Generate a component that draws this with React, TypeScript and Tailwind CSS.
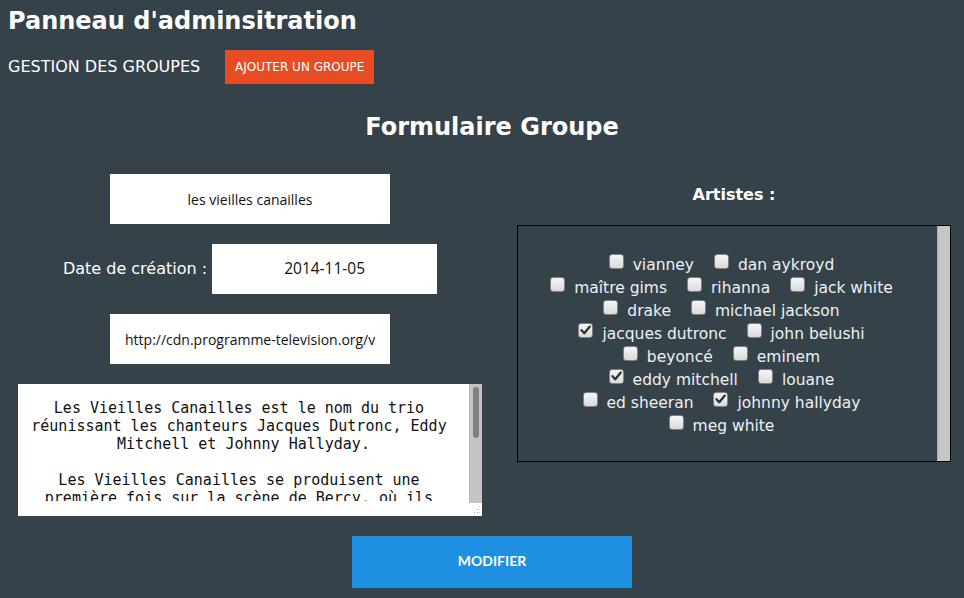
import React from "react";

type Artist = { name: string; checked?: boolean };

const rows: Artist[][] = [
  [{ name: "vianney" }, { name: "dan aykroyd" }],
  [{ name: "maître gims" }, { name: "rihanna" }, { name: "jack white" }],
  [{ name: "drake" }, { name: "michael jackson" }],
  [{ name: "jacques dutronc", checked: true }, { name: "john belushi" }],
  [{ name: "beyoncé" }, { name: "eminem" }],
  [{ name: "eddy mitchell", checked: true }, { name: "louane" }],
  [{ name: "ed sheeran" }, { name: "johnny hallyday", checked: true }],
  [{ name: "meg white" }],
];

function Checkbox({ checked }: { checked?: boolean }) {
  return (
    <span className="relative inline-block w-[15px] h-[15px] mb-px ml-[4px] mr-[9px] rounded-[3px] border border-[#7d8285] bg-gradient-to-b from-[#f6f6f6] to-[#dadada]">
      {checked && (
        <svg
          viewBox="0 0 15 15"
          className="absolute -left-px -top-px w-[15px] h-[15px]"
        >
          <path
            d="M3.5 7.2 L6.3 10.2 L11.8 3.6"
            fill="none"
            stroke="#2f3336"
            strokeWidth="2.3"
            strokeLinecap="round"
            strokeLinejoin="round"
          />
        </svg>
      )}
    </span>
  );
}

export default function App() {
  return (
    <div className="min-h-screen w-full overflow-hidden bg-[#36424a] text-white font-['DejaVu_Sans',sans-serif]">
      {/* header */}
      <h1 className="pl-2 pt-[7px] text-[24px] font-bold leading-[28px]">
        Panneau d'adminsitration
      </h1>
      <div className="mt-[15px] flex h-[34px] items-center pl-2">
        <span className="-mt-[2px] text-[16px] leading-[19px]">
          GESTION DES GROUPES
        </span>
        <button className="ml-[25px] h-[34px] w-[149px] bg-[#e84c22] text-[12px] text-white">
          AJOUTER UN GROUPE
        </button>
      </div>

      <h2 className="mt-[29px] pl-5 text-center text-[24px] font-bold leading-[28px]">
        Formulaire Groupe
      </h2>

      {/* form */}
      <div className="mt-[33px] flex">
        <div className="flex w-[500px] flex-col items-center gap-5">
          <div className="flex h-[50px] w-[280px] items-center justify-center bg-white font-['Open_Sans',sans-serif] text-[14px] text-[#111]">
            les vieilles canailles
          </div>

          <div className="flex items-center gap-[5px]">
            <span className="text-[16px]">Date de création :</span>
            <div className="flex h-[50px] w-[225px] items-center justify-center bg-white font-['Open_Sans',sans-serif] text-[15.5px] text-[#111]">
              2014-11-05
            </div>
          </div>

          <div className="flex h-[50px] w-[280px] items-center bg-white px-[15px] font-['Open_Sans',sans-serif] text-[14px] text-[#111]">
            <div className="w-full overflow-hidden whitespace-nowrap">
              http://cdn.programme-television.org/var/premiere/storage/images
            </div>
          </div>

          {/* textarea */}
          <div className="flex h-[132px] w-[464px] bg-white">
            <div className="h-[117px] flex-1 overflow-hidden px-[12px] pt-[15px] text-center font-['DejaVu_Sans_Mono',monospace] text-[15px] leading-[18px] text-[#111] whitespace-break-spaces">
              {"Les Vieilles Canailles est le nom du trio réunissant les chanteurs Jacques Dutronc, Eddy Mitchell et Johnny Hallyday.\n\nLes Vieilles Canailles se produisent une première fois sur la scène de Bercy, où ils chantent ensemble pour la première fois."}
            </div>
            <div className="flex w-[13px] flex-col">
              <div className="relative h-[119px] border-l border-[#b5b5b5] bg-[#c3c3c3]">
                <div className="absolute left-[3px] top-[3px] h-[51px] w-[6px] rounded-full bg-[#808080]" />
              </div>
              <div className="relative flex-1">
                <svg viewBox="0 0 13 13" className="h-[13px] w-[13px]">
                  <rect x="10" y="3" width="1" height="1" fill="#bbb" />
                  <rect x="8" y="6" width="1" height="1" fill="#aaa" />
                  <rect x="10" y="6" width="1" height="1" fill="#bbb" />
                  <rect x="5" y="9" width="1" height="1" fill="#aaa" />
                  <rect x="8" y="9" width="1" height="1" fill="#aaa" />
                  <rect x="10" y="9" width="1" height="1" fill="#bbb" />
                </svg>
              </div>
            </div>
          </div>
        </div>

        {/* artists */}
        <div className="flex-1">
          <p className="ml-[17px] mt-[11px] w-[434px] text-center text-[16px] font-bold leading-[19px]">
            Artistes :
          </p>
          <div className="ml-[17px] mt-[21px] flex h-[237px] w-[434px] border border-black">
            <div className="flex-1 pt-[28px] text-[15.5px] leading-[23px] text-[#eef0f1]">
              {rows.map((row, i) => (
                <div key={i} className="text-center whitespace-nowrap">
                  {row.map((a) => (
                    <span key={a.name}>
                      <Checkbox checked={a.checked} />
                      {a.name}
                      <span className="inline-block w-[16px]" />
                    </span>
                  ))}
                </div>
              ))}
            </div>
            <div className="w-[13px] border-l border-[#b0b2b1] bg-[#c4c6c5]" />
          </div>
        </div>
      </div>

      <div className="mt-5 flex justify-center pl-5">
        <button className="h-[52px] w-[280px] bg-[#1e8fe1] pb-[3px] font-['Lato',sans-serif] text-[14px] font-bold text-white">
          MODIFIER
        </button>
      </div>
    </div>
  );
}
